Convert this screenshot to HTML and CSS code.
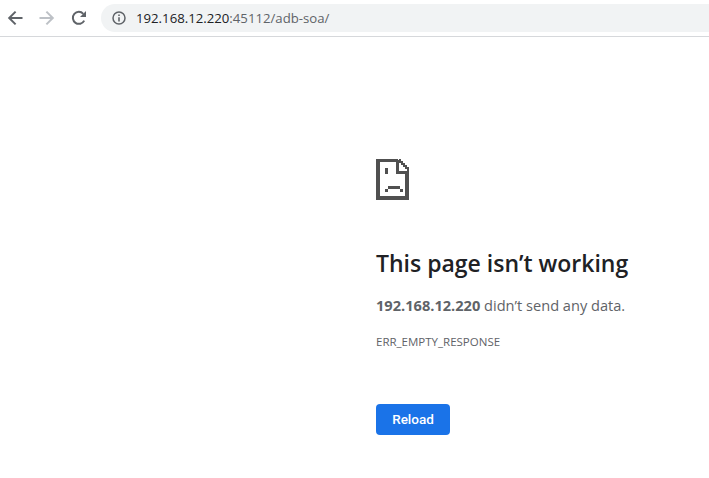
FILE: index.html
```html
<!DOCTYPE html>
<html lang="en">
<head>
    <meta charset="UTF-8">
    <meta name="viewport" content="width=device-width, initial-scale=1.0">
    <title>192.168.12.220</title>
    <link rel="stylesheet" href="styles.css">
</head>
<body>
    <!-- Browser toolbar -->
    <div class="toolbar">
        <button class="nav-btn" type="button" aria-label="Back">
            <svg width="16" height="16" viewBox="0 0 16 16"><path d="M15.5 8H2.5M8.6 1.6L2.2 8l6.4 6.4" fill="none" stroke="#5f6368" stroke-width="2"/></svg>
        </button>
        <button class="nav-btn nav-btn-forward" type="button" aria-label="Forward">
            <svg width="16" height="16" viewBox="0 0 16 16"><path d="M.5 8h13M7.4 1.6L13.8 8l-6.4 6.4" fill="none" stroke="#bdc1c6" stroke-width="2"/></svg>
        </button>
        <button class="nav-btn nav-btn-reload" type="button" aria-label="Reload">
            <svg width="16" height="16" viewBox="0 0 16 16"><path d="M13.2 10.6A6 6 0 1 1 12.3 3.8" fill="none" stroke="#5f6368" stroke-width="2"/><path d="M15 1v6H9z" fill="#5f6368"/></svg>
        </button>
        <div class="omnibox">
            <svg class="info-icon" width="14" height="14" viewBox="0 0 14 14"><circle cx="7" cy="7" r="6" fill="none" stroke="#5f6368" stroke-width="1.5"/><path d="M6.2 6.2h1.6v4.2H6.2zM6.2 3.5h1.6v1.6H6.2z" fill="#5f6368"/></svg>
            <span class="url-host">192.168.12.220</span><span class="url-rest">:45112/adb-soa/</span>
        </div>
    </div>

    <!-- Error page -->
    <div class="error-page">
        <svg class="sad-tab" width="33" height="41" viewBox="0 0 33 41">
            <path fill="#505050" d="M0 0h22v3H4v34h25V14h4v27H0z"/>
            <path fill="#505050" d="M20 1h3v11h10v3H20z"/>
            <path fill="#505050" d="M23 0h2v2h2v2h2v2h2v2h2v5h-2v-3h-2V8h-2V6h-2V4h-2z"/>
            <path fill="#505050" d="M9 9h3v6H9z"/>
            <path fill="#505050" d="M12 27h12v3H12zM9 30h3v3H9zM24 30h3v3h-3z"/>
        </svg>
        <h1 class="error-title">This page isn’t working</h1>
        <p class="error-text"><strong>192.168.12.220</strong> didn’t send any data.</p>
        <div class="error-code">ERR_EMPTY_RESPONSE</div>
        <button class="reload-btn" type="button">Reload</button>
    </div>
</body>
</html>
```

FILE: styles.css
```css
body {
    margin: 0;
    background-color: #ffffff;
    font-family: "Open Sans", "Noto Sans", Arial, sans-serif;
    overflow: hidden;
}

.toolbar {
    display: flex;
    align-items: center;
    height: 36px;
    border-bottom: 1px solid #d6d8db;
    box-sizing: content-box;
}

.nav-btn {
    display: flex;
    align-items: center;
    justify-content: center;
    width: 16px;
    height: 16px;
    margin-left: 7px;
    padding: 0;
    border: none;
    background: none;
}

.nav-btn-forward {
    margin-left: 16px;
}

.nav-btn-reload {
    margin-left: 16px;
}

.omnibox {
    display: flex;
    align-items: center;
    flex-grow: 1;
    height: 28px;
    margin-left: 14px;
    padding-left: 11px;
    background-color: #f1f3f4;
    border-radius: 14px 0 0 14px;
    font-size: 13.2px;
}

.info-icon {
    margin-right: 10px;
}

.url-host {
    color: #202124;
}

.url-rest {
    color: #5f6368;
}

.error-page {
    display: flex;
    flex-direction: column;
    align-items: flex-start;
    padding: 122px 0 0 376px;
}

.error-title {
    margin: 47px 0 0;
    color: #202124;
    font-size: 23px;
    font-weight: 600;
    line-height: 32px;
}

.error-text {
    margin: 16px 0 0;
    color: #5f6368;
    font-size: 14.6px;
    line-height: 20px;
}

.error-text strong {
    font-weight: 700;
}

.error-code {
    margin-top: 19px;
    color: #5f6368;
    font-size: 11.5px;
    line-height: 16px;
}

.reload-btn {
    width: 74px;
    height: 31px;
    margin-top: 54px;
    padding: 0 0 2px;
    border: none;
    border-radius: 4px;
    background-color: #1a73e8;
    color: #ffffff;
    font-family: Roboto, Arial, sans-serif;
    font-size: 13.5px;
    font-weight: 500;
}
```
